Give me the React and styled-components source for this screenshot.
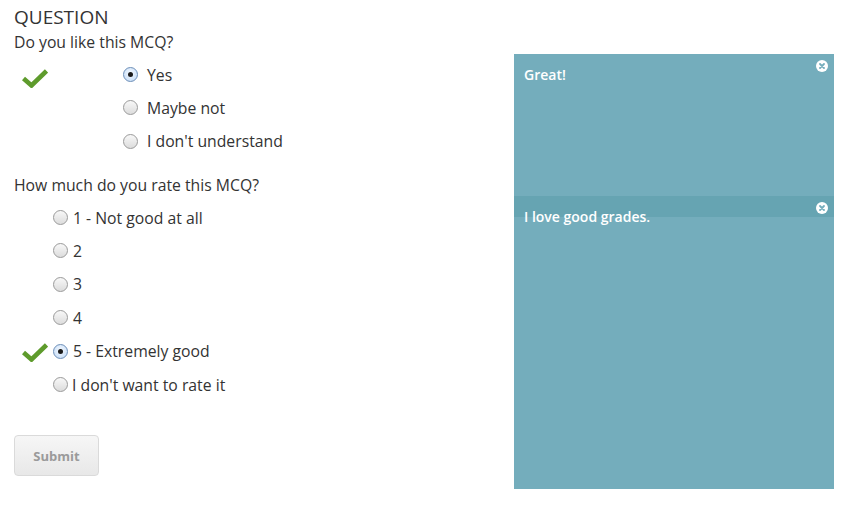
import React from "react";
import styled, { createGlobalStyle } from "styled-components";

const Global = createGlobalStyle`
  html, body { margin: 0; padding: 0; background: #fff; }
  body { font-family: "Open Sans", "Noto Sans", sans-serif; color: #333; }
`;

const Page = styled.div`
  display: flex;
  width: 850px;
  height: 508px;
`;

const Form = styled.div`
  width: 514px;
  padding: 5px 0 0 14px;
  box-sizing: border-box;
  display: flex;
  flex-direction: column;
`;

const Heading = styled.div`
  font-size: 19px;
  line-height: 24px;
  color: #333;
`;

const Prompt = styled.div`
  font-size: 15.75px;
  line-height: 20px;
  margin-top: ${(p) => p.$mt}px;
`;

const List = styled.div`
  display: flex;
  flex-direction: column;
  margin-top: ${(p) => p.$mt}px;
`;

const Row = styled.div`
  display: flex;
  align-items: center;
  height: ${(p) => p.$h}px;
  font-size: 15.75px;
  color: #333;
`;

const CheckSlot = styled.div`
  width: ${(p) => p.$w}px;
  flex: none;
  display: flex;
  align-items: center;
  padding-left: 8px;
  box-sizing: border-box;
  height: 100%;
  padding-top: ${(p) => p.$dy}px;
`;

const Radio = styled.span`
  width: 15px;
  height: 15px;
  flex: none;
  border-radius: 50%;
  box-sizing: border-box;
  border: 1px solid ${(p) => (p.$checked ? "#6d8fb8" : "#9a9a9a")};
  background: ${(p) =>
    p.$checked
      ? "radial-gradient(circle at 50% 40%, #f4f9ff 0%, #cfe2f8 70%, #b7d1ef 100%)"
      : "linear-gradient(#f8f8f8, #dcdcdc)"};
  display: flex;
  align-items: center;
  justify-content: center;
  margin-right: ${(p) => p.$gap}px;
  &::after {
    content: "";
    width: 5px;
    height: 5px;
    border-radius: 50%;
    background: #1a1a1a;
    display: ${(p) => (p.$checked ? "block" : "none")};
  }
`;

const Submit = styled.button`
  margin-top: 34px;
  width: 85px;
  height: 41px;
  border: 1px solid #dadada;
  border-radius: 4px;
  background: linear-gradient(#f6f6f6, #e8e8e8);
  color: #9a9a9a;
  font-family: "Open Sans", "Noto Sans", sans-serif;
  font-weight: 700;
  font-size: 13px;
  padding: 0;
  cursor: default;
`;

const Panel = styled.div`
  margin-top: 54px;
  width: 320px;
  height: 435px;
  background: #74adbc;
  display: flex;
  flex-direction: column;
`;

const Note = styled.div`
  position: relative;
  height: ${(p) => p.$h}px;
  background: ${(p) => (p.$dark ? "#66a4b2" : "transparent")};
  color: #fff;
  font-weight: 600;
  font-size: 14px;
  line-height: 20px;
  padding: ${(p) => p.$pt}px 10px 0;
  box-sizing: border-box;
  white-space: nowrap;
`;

const Close = styled.svg`
  position: absolute;
  right: 6px;
  top: 6px;
  width: 12px;
  height: 12px;
`;

function CloseIcon() {
  return (
    <Close viewBox="0 0 12 12">
      <circle cx="6" cy="6" r="6" fill="#fff" />
      <path d="M4 4 L8 8 M8 4 L4 8" stroke="#74adbc" strokeWidth="1.8" strokeLinecap="round" />
    </Close>
  );
}

function Check() {
  return (
    <svg width="26" height="20" viewBox="0 0 26 20">
      <path d="M1.5 10.5 L9.5 17.5 L24.5 3" fill="none" stroke="#5e9b2c" strokeWidth="4.6" strokeLinejoin="miter" />
    </svg>
  );
}

const q1 = [
  { label: "Yes", checked: true, mark: true },
  { label: "Maybe not" },
  { label: "I don't understand" },
];

const q2 = [
  { label: "1 - Not good at all" },
  { label: "2" },
  { label: "3" },
  { label: "4" },
  { label: "5 - Extremely good", checked: true, mark: true },
  { label: "I don't want to rate it", gap: 4 },
];

export default function App() {
  return (
    <>
      <Global />
      <Page>
        <Form>
          <Heading>QUESTION</Heading>
          <Prompt $mt={3}>Do you like this MCQ?</Prompt>
          <List $mt={6}>
            {q1.map((o) => (
              <Row key={o.label} $h={33.3}>
                <CheckSlot $w={109} $dy={6}>{o.mark && <Check />}</CheckSlot>
                <Radio $checked={o.checked} $gap={9} />
                {o.label}
              </Row>
            ))}
          </List>
          <Prompt $mt={17}>How much do you rate this MCQ?</Prompt>
          <List $mt={6}>
            {q2.map((o) => (
              <Row key={o.label} $h={33.4}>
                <CheckSlot $w={39} $dy={2}>{o.mark && <Check />}</CheckSlot>
                <Radio $checked={o.checked} $gap={o.gap ?? 5} />
                {o.label}
              </Row>
            ))}
          </List>
          <div>
            <Submit>Submit</Submit>
          </div>
        </Form>
        <Panel>
          <Note $h={142} $pt={11}>
            Great!
            <CloseIcon />
          </Note>
          <Note $h={21} $dark $pt={11}>
            I love good grades.
            <CloseIcon />
          </Note>
        </Panel>
      </Page>
    </>
  );
}
